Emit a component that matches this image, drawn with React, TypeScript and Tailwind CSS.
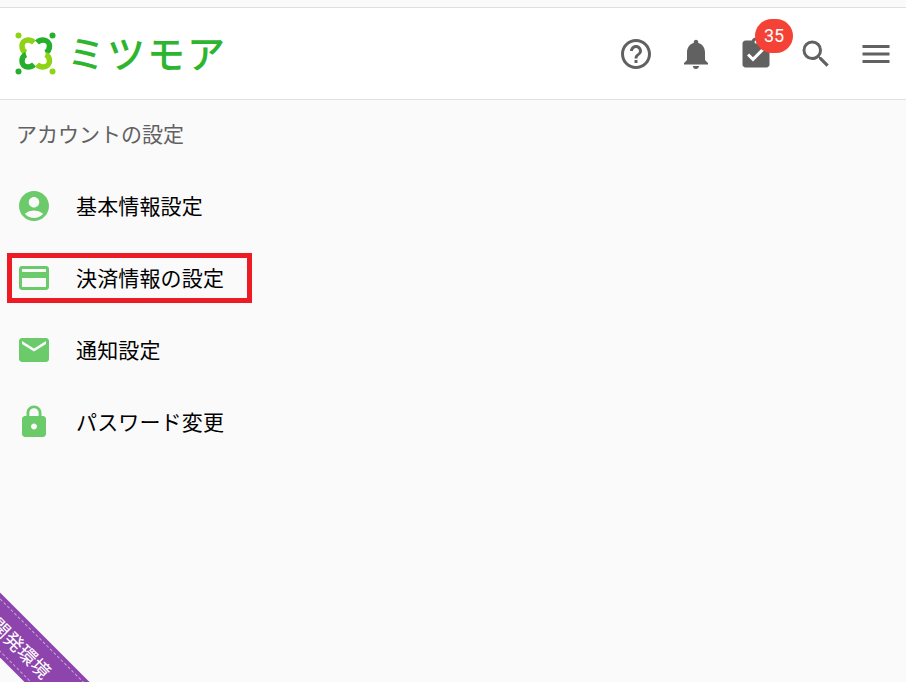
import type { ComponentType } from "react";
import {
  MdAccountCircle,
  MdAssignmentTurnedIn,
  MdCreditCard,
  MdEmail,
  MdHelpOutline,
  MdLock,
  MdMenu,
  MdNotifications,
  MdSearch,
} from "react-icons/md";

interface MenuItem {
  label: string;
  icon: ComponentType<{ size?: number; className?: string }>;
  marked?: boolean;
}

const ITEMS: MenuItem[] = [
  { label: "基本情報設定", icon: MdAccountCircle },
  { label: "決済情報の設定", icon: MdCreditCard, marked: true },
  { label: "通知設定", icon: MdEmail },
  { label: "パスワード変更", icon: MdLock },
];

function LogoMark() {
  return (
    <svg width="42" height="44" viewBox="0 0 42 44" fill="none" strokeWidth="5.5">
      <circle cx="3.5" cy="3.5" r="3" fill="#8fd316" />
      <circle cx="37.5" cy="3.5" r="3" fill="#25b02b" />
      <circle cx="3.5" cy="39.5" r="3" fill="#25b02b" />
      <circle cx="37.5" cy="39.5" r="3" fill="#8fd316" />
      <path d="M19 10.5 C17 8.5 15 8 13 8 C9 8 7 11 7 14 C7 17 8.5 19.5 11 20.5" stroke="#8fd316" />
      <path d="M22 10.5 C24 8.5 26 8 28 8 C32 8 34.5 11 34.5 14 C34.5 17 33 19.5 30.5 20.5" stroke="#25b02b" />
      <path d="M19 32.5 C17 34.5 15 35 13 35 C9 35 7 32 7 29 C7 26 8.5 23.5 11 22.5" stroke="#25b02b" />
      <path d="M22 32.5 C24 34.5 26 35 28 35 C32 35 34.5 32 34.5 29 C34.5 26 33 23.5 30.5 22.5" stroke="#8fd316" />
    </svg>
  );
}

export default function App() {
  return (
    <div className="relative h-[682px] overflow-hidden bg-[#fafafa] font-['Noto_Sans_CJK_JP','Noto_Sans',sans-serif]">
      <header className="mt-[7px] flex h-[93px] items-center justify-between border-y border-[#e0e0e0] bg-white">
        <div className="flex items-center pl-[15px]">
          <LogoMark />
          <span className="ml-[10px] whitespace-nowrap pb-[3px] text-[38px] leading-none font-medium tracking-[2px] text-[#2db52f]">
            ミツモア
          </span>
        </div>
        <div className="flex text-[#616161]">
          <div className="flex w-[60px] justify-center">
            <MdHelpOutline size={36} />
          </div>
          <div className="flex w-[60px] justify-center">
            <MdNotifications size={36} />
          </div>
          <div className="relative flex w-[60px] justify-center">
            <MdAssignmentTurnedIn size={36} />
            <span className="absolute top-[-17px] left-[29px] flex h-[34px] w-[38px] items-center justify-center rounded-[17px] bg-[#f44336] font-['Roboto',sans-serif] text-[18px] text-white">
              35
            </span>
          </div>
          <div className="flex w-[60px] justify-center">
            <MdSearch size={36} />
          </div>
          <div className="flex w-[60px] justify-center">
            <MdMenu size={36} />
          </div>
        </div>
      </header>

      <main>
        <h2 className="pt-[17px] pl-4 text-[21px] leading-8 font-normal text-[#616161]">アカウントの設定</h2>
        <ul className="mt-[21px]">
          {ITEMS.map((item) => {
            const Icon = item.icon;
            return (
              <li key={item.label} className="relative flex h-[72px] items-center pl-4">
                <Icon size={36} className="text-[#6bcb6b]" />
                <span className="ml-6 pb-[2px] text-[21px] leading-8 tracking-[0.15px] text-black">{item.label}</span>
                {item.marked && (
                  <span className="absolute top-[11px] left-[7px] h-[50px] w-[245px] border-[5px] border-[#ed1c24]" />
                )}
              </li>
            );
          })}
        </ul>
      </main>

      <div className="absolute top-[624px] left-[-78px] flex h-[46px] w-[200px] rotate-45 items-center justify-center bg-[#8e44ad] text-[19px] leading-none text-white">
        <span className="absolute inset-x-0 top-[4px] border-t border-dashed border-[#c9a5d8]" />
        <span className="absolute inset-x-0 bottom-[4px] border-t border-dashed border-[#c9a5d8]" />
        開発環境
      </div>
    </div>
  );
}
